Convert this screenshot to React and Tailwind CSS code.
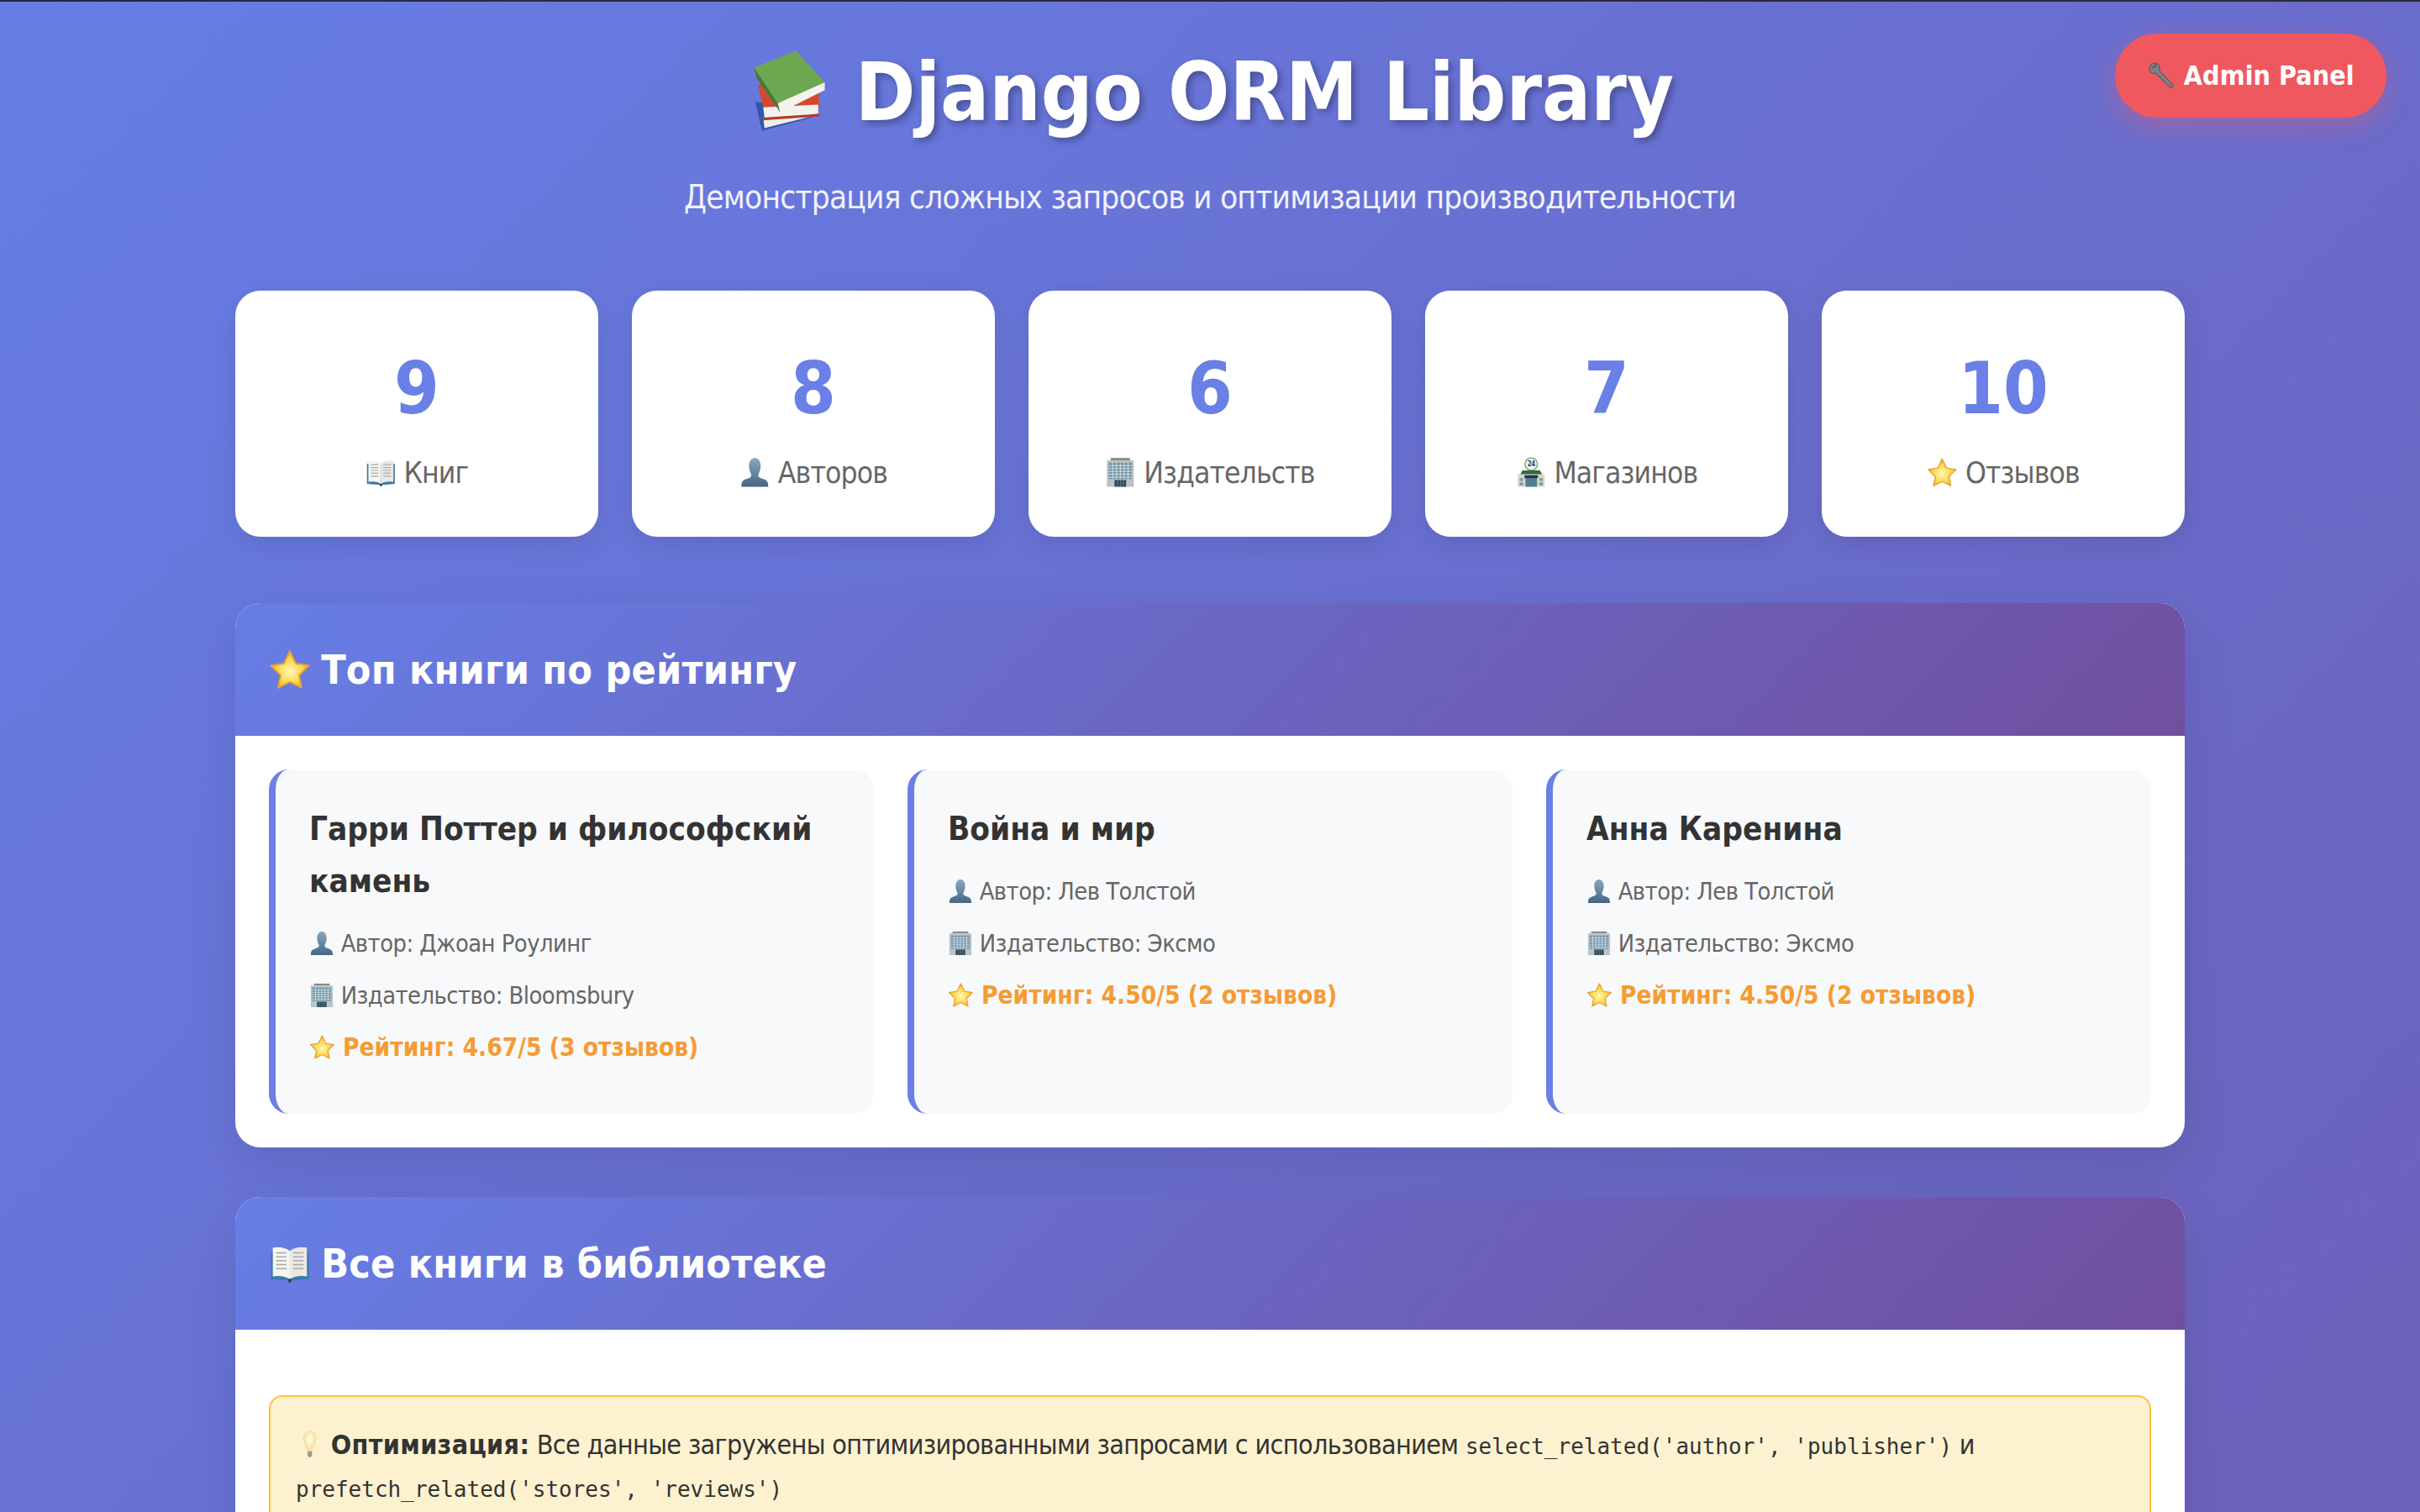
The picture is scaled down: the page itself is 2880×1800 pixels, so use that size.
import { useId } from 'react'

const Svg = ({ children }) => (
  <svg viewBox="0 0 64 64" className="inline-block w-[1.04em] h-[1.04em] align-[-0.16em]" aria-hidden="true">{children}</svg>
)

function BooksIcon() {
  return (
    <Svg>
      <path d="M7 40 L12 62 L50 52 L48 44Z" fill="#2f5aa5" />
      <path d="M13 52 L49 45 L50 51 L14 60Z" fill="#eeeeea" />
      <path d="M9 27 L13 44 L56 44 L55 30 L44 24Z" fill="#d2492f" />
      <path d="M13 44 L55 42 L55 49 L14 52Z" fill="#f2f2ee" />
      <path d="M13 52 L56 49 L56 51 L13 54Z" fill="#b83a25" />
      <path d="M6 14 L38 1 L60 25 L24 41Z" fill="#6ba84f" />
      <path d="M24 41 L60 25 L60 31 L26 48Z" fill="#f4f4ee" />
      <path d="M6 14 L24 41 L26 48 L8 22Z" fill="#44793a" />
    </Svg>
  )
}

function WrenchIcon() {
  return (
    <Svg>
      <path d="M22 4 C12 2 4 10 6 20 C8 27 15 29 21 27 L53 60 C57 63 62 58 59 54 L28 21 C30 15 29 8 22 4 L20 13 L12 15Z" fill="#7d8388" stroke="#55595d" strokeWidth="2" />
      <circle cx="55" cy="56" r="2.5" fill="none" stroke="#b9565a" strokeWidth="1.5" />
    </Svg>
  )
}

function BookIcon() {
  return (
    <Svg>
      <path d="M3 56 L3 14 L32 18 L61 14 L61 56 L36 58 L28 58Z" fill="#3a7ca5" />
      <path d="M6 52 V8 C16 6 26 8 32 13 V56 C26 52 16 50 6 52Z" fill="#f5f5f2" />
      <path d="M58 52 V8 C48 6 38 8 32 13 V56 C38 52 48 50 58 52Z" fill="#e9e9e4" />
      <path d="M11 16 H27 M11 22 H27 M11 28 H27 M11 34 H27 M11 40 H27 M37 16 H53 M37 22 H53 M37 28 H53 M37 34 H53 M37 40 H53" stroke="#a8a8a8" strokeWidth="2" />
      <path d="M30 56 H34 V61 H30Z" fill="#333" />
    </Svg>
  )
}

function PersonIcon() {
  const id = useId()
  return (
    <Svg>
      <defs>
        <linearGradient id={id} x1="0" y1="0" x2="0" y2="1">
          <stop offset="0" stopColor="#88a8c2" />
          <stop offset="1" stopColor="#456684" />
        </linearGradient>
      </defs>
      <path d="M32 2 C41 2 45 12 44 22 C43 30 40 34 39 38 C39 42 44 44 50 46 C57 48 60 52 60 62 H4 C4 52 7 48 14 46 C20 44 25 42 25 38 C24 34 21 30 20 22 C19 12 23 2 32 2Z" fill={`url(#${id})`} />
    </Svg>
  )
}

function OfficeIcon() {
  return (
    <Svg>
      <path d="M12 2 H52 V7 H12Z" fill="#8d8a85" />
      <path d="M4 7 H60 V62 H4Z" fill="#b9c3c8" />
      <path d="M8 12 H56 V46 H8Z" fill="#6b93a8" />
      <path d="M8 18 H56 M8 24 H56 M8 30 H56 M8 36 H56 M8 42 H56 M16 12 V46 M24 12 V46 M32 12 V46 M40 12 V46 M48 12 V46" stroke="#dfe6e8" strokeWidth="1.6" />
      <path d="M20 48 H44 V62 H20Z" fill="#2f4854" />
      <path d="M32 48 V62 M26 48 V62 M38 48 V62" stroke="#6f8c99" strokeWidth="1.5" />
    </Svg>
  )
}

function StoreIcon() {
  return (
    <Svg>
      <circle cx="32" cy="15" r="13" fill="#f2f4f2" stroke="#55b56c" strokeWidth="2.5" />
      <text x="32" y="20" textAnchor="middle" fontSize="14" fontWeight="700" fontFamily="'DejaVu Sans', sans-serif" fill="#35406e">24</text>
      <path d="M14 28 H50 L56 38 H8Z" fill="#2f6b3d" />
      <path d="M4 36 H60 V62 H4Z" fill="#d8d6c8" />
      <path d="M20 42 H44 V62 H20Z" fill="#4d7f99" />
      <path d="M18 38 H46 V44 H18Z" fill="#2c2f55" />
      <path d="M8 44 H15 V50 H8Z M49 44 H56 V50 H49Z M8 53 H15 V59 H8Z M49 53 H56 V59 H49Z" fill="#7c98a8" />
    </Svg>
  )
}

function StarIcon() {
  const id = useId()
  return (
    <Svg>
      <defs>
        <radialGradient id={id} cx="0.5" cy="0.55" r="0.55">
          <stop offset="0" stopColor="#fff6b8" />
          <stop offset="0.6" stopColor="#fcd84a" />
          <stop offset="1" stopColor="#f2a52a" />
        </radialGradient>
      </defs>
      <path d="M32 4 L41 23 L61 26 L46 41 L50 60 L32 51 L14 60 L18 41 L3 26 L23 23Z" fill={`url(#${id})`} stroke="#e9a032" strokeWidth="2.5" strokeLinejoin="round" />
    </Svg>
  )
}

function BulbIcon() {
  const id = useId()
  return (
    <Svg>
      <defs>
        <radialGradient id={id} cx="0.5" cy="0.4" r="0.6">
          <stop offset="0" stopColor="#fffef2" />
          <stop offset="1" stopColor="#f7dc8c" />
        </radialGradient>
      </defs>
      <path d="M32 2 C22 2 17 11 18 21 C19 31 26 36 27 48 H37 C38 36 45 31 46 21 C47 11 42 2 32 2Z" fill={`url(#${id})`} stroke="#eed08a" strokeWidth="1.5" />
      <path d="M27 48 H37 V58 L32 62 L27 58Z" fill="#9a9a96" />
    </Svg>
  )
}

const STATS = [
  { value: '9', icon: <BookIcon />, label: 'Книг' },
  { value: '8', icon: <PersonIcon />, label: 'Авторов' },
  { value: '6', icon: <OfficeIcon />, label: 'Издательств' },
  { value: '7', icon: <StoreIcon />, label: 'Магазинов' },
  { value: '10', icon: <StarIcon />, label: 'Отзывов' },
]

const TOP_BOOKS = [
  { title: 'Гарри Поттер и философский камень', author: 'Джоан Роулинг', publisher: 'Bloomsbury', rating: '4.67/5 (3 отзывов)' },
  { title: 'Война и мир', author: 'Лев Толстой', publisher: 'Эксмо', rating: '4.50/5 (2 отзывов)' },
  { title: 'Анна Каренина', author: 'Лев Толстой', publisher: 'Эксмо', rating: '4.50/5 (2 отзывов)' },
]

function SectionHeader({ icon, title }) {
  return (
    <div className="rounded-t-[30px] bg-[linear-gradient(135deg,#667ee6_0%,#704f9f_100%)] px-10 py-10">
      <h2 className="text-[48px] font-bold leading-[78px] tracking-[0.004em] text-white">{icon} <span className="-ml-[3px]">{title}</span></h2>
    </div>
  )
}

export default function App() {
  return (
    <div className="relative h-[1800px] overflow-hidden border-t-2 border-[#2a2a3a] bg-[linear-gradient(135deg,#667ee6_0%,#704f9f_100%)] bg-[length:100%_4700px] bg-no-repeat font-['DejaVu_Sans_Condensed','DejaVu_Sans',sans-serif] text-[32px] leading-[1.6] text-[#333] [font-stretch:condensed]">
      <a className="absolute right-10 top-[38px] flex h-[100px] w-[323px] items-center justify-center rounded-full bg-[#f0585f] pt-[2px] text-[32px] font-bold text-white shadow-[0_10px_30px_rgba(238,90,111,0.4)]">
        <span><WrenchIcon /> Admin Panel</span>
      </a>

      <div className="mx-auto w-[2400px] px-10">
        <header className="pt-[38px] text-center text-white">
          <h1 className="text-[96px] font-bold leading-[140px] [text-shadow:4px_4px_8px_rgba(0,0,0,0.3)]"><BooksIcon /> Django ORM Library</h1>
          <p className="mt-[22px] text-[38.4px] leading-[66px] tracking-[-0.02em] text-white/90">Демонстрация сложных запросов и оптимизации производительности</p>
        </header>

        <div className="mt-[78px] grid grid-cols-5 gap-10">
          {STATS.map(stat => (
            <div key={stat.label} className="rounded-[30px] bg-white px-[30px] pb-[48px] pt-[58px] text-center shadow-[0_8px_30px_rgba(0,0,0,0.1)]">
              <div className="text-[86px] font-bold leading-[116px] text-[#6a80e6]">{stat.value}</div>
              <div className="mt-[15px] text-[35.2px] leading-[56px] tracking-[-0.025em] text-[#666]">{stat.icon} {stat.label}</div>
            </div>
          ))}
        </div>

        <section className="mt-[79px] rounded-[30px] bg-white shadow-[0_20px_60px_rgba(0,0,0,0.1)]">
          <SectionHeader icon={<StarIcon />} title="Топ книги по рейтингу" />
          <div className="grid grid-cols-3 gap-10 p-10">
            {TOP_BOOKS.map(book => (
              <div key={book.title} className="rounded-[24px] border-l-8 border-[#6a80e6] bg-[#f8f9fa] px-10 pb-[56px] pt-[40px]">
                <h3 className="mb-5 text-[38.4px] font-bold leading-[62px] text-[#333]">{book.title}</h3>
                <p className="my-2 text-[28.8px] leading-[46px] tracking-[-0.018em] text-[#666]"><PersonIcon /> Автор: {book.author}</p>
                <p className="my-2 mt-4 text-[28.8px] leading-[46px] tracking-[-0.018em] text-[#666]"><OfficeIcon /> Издательство: {book.publisher}</p>
                <p className="mt-4 text-[29.6px] font-bold leading-[46px] text-[#f59b33]"><StarIcon /> Рейтинг: {book.rating}</p>
              </div>
            ))}
          </div>
        </section>

        <section className="mt-[59px] rounded-[30px] bg-white shadow-[0_20px_60px_rgba(0,0,0,0.1)]">
          <SectionHeader icon={<BookIcon />} title="Все книги в библиотеке" />
          <div className="p-10">
            <div className="mt-[38px] rounded-[16px] border-2 border-[#f9c140] bg-[#fdf2d0] px-[30px] pb-[30px] pt-[32px] tracking-[-0.02em] text-[#333]">
              <BulbIcon /> <strong className="tracking-[0.01em]">Оптимизация:</strong> Все данные загружены оптимизированными запросами с использованием{' '}
              <code className="font-['DejaVu_Sans_Mono',monospace] text-[26px] tracking-normal">select_related('author', 'publisher')</code> и{' '}
              <code className="font-['DejaVu_Sans_Mono',monospace] text-[26px] tracking-normal">prefetch_related('stores', 'reviews')</code>
            </div>
          </div>
        </section>
      </div>
    </div>
  )
}
